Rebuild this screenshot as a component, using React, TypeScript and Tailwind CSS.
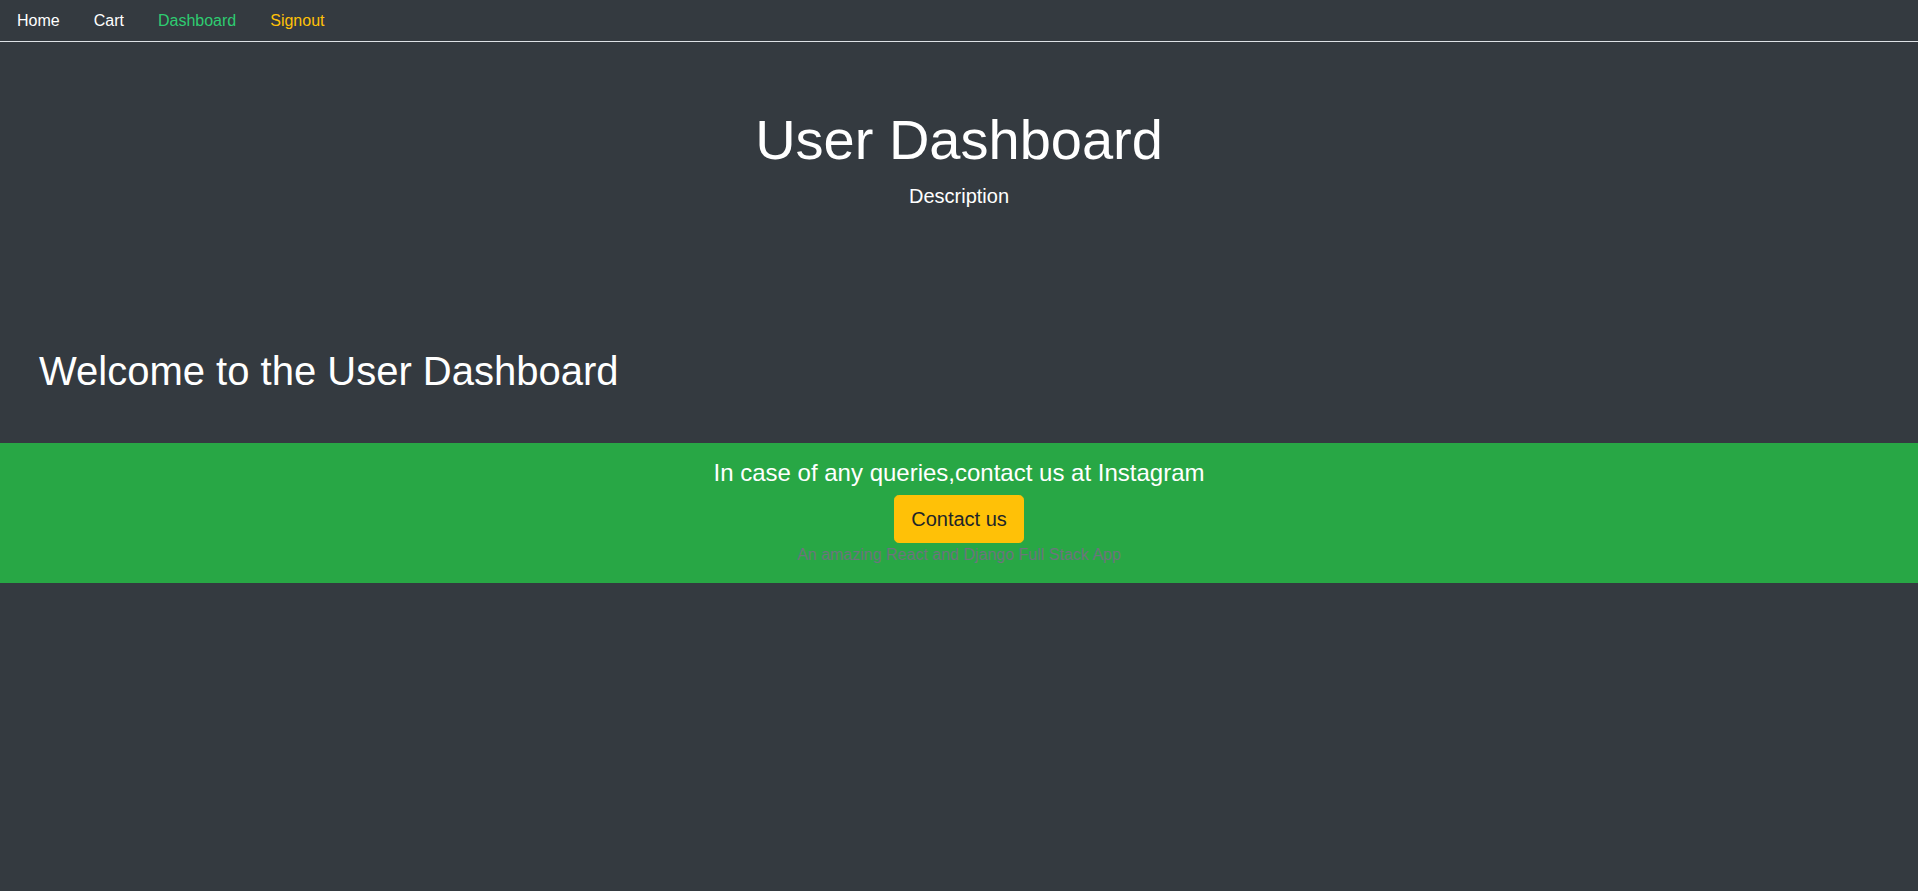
export default function App() {
  const links = [
    { label: "Home", color: "text-white" },
    { label: "Cart", color: "text-white" },
    { label: "Dashboard", color: "text-[#2ecc71]" },
    { label: "Signout", color: "text-[#ffc107]" },
  ];

  return (
    <div className="min-h-screen bg-[#343a40] text-white font-['Liberation_Sans',Arial,sans-serif] text-[16px] leading-[1.5]">
      {/* Menu */}
      <ul className="flex border-b border-[#dee2e6] bg-[#343a40]">
        {links.map((l) => (
          <li key={l.label} className="-mb-px">
            <a href="#" className={`block border border-transparent px-4 py-2 ${l.color}`}>
              {l.label}
            </a>
          </li>
        ))}
      </ul>

      <div className="px-[15px]">
        {/* Jumbotron */}
        <div className="mb-8 rounded-[4.8px] px-8 py-16 text-center text-white">
          <h2 className="mb-2 text-[56px] font-light leading-[1.2]">User Dashboard</h2>
          <p className="mb-4 text-[20px] font-light leading-[1.5]">Description</p>
        </div>
        <div className="p-6">
          <h1 className="mb-2 text-[40px] font-normal leading-[1.2]">Welcome to the User Dashboard</h1>
        </div>
      </div>

      {/* Footer */}
      <footer className="py-4">
        <div className="bg-[#28a745] px-[15px] py-4 text-center text-white">
          <h4 className="mb-[7px] text-[24px] font-normal leading-[1.2]">
            In case of any queries,contact us at Instagram
          </h4>
          <button className="inline-block rounded-[4.8px] border border-[#ffc107] bg-[#ffc107] px-4 py-2 text-[20px] leading-[1.5] text-[#212529]">
            Contact us
          </button>
          <div>
            <span className="text-[#6c757d]">An amazing React and Django Full Stack App</span>
          </div>
        </div>
      </footer>
    </div>
  );
}
